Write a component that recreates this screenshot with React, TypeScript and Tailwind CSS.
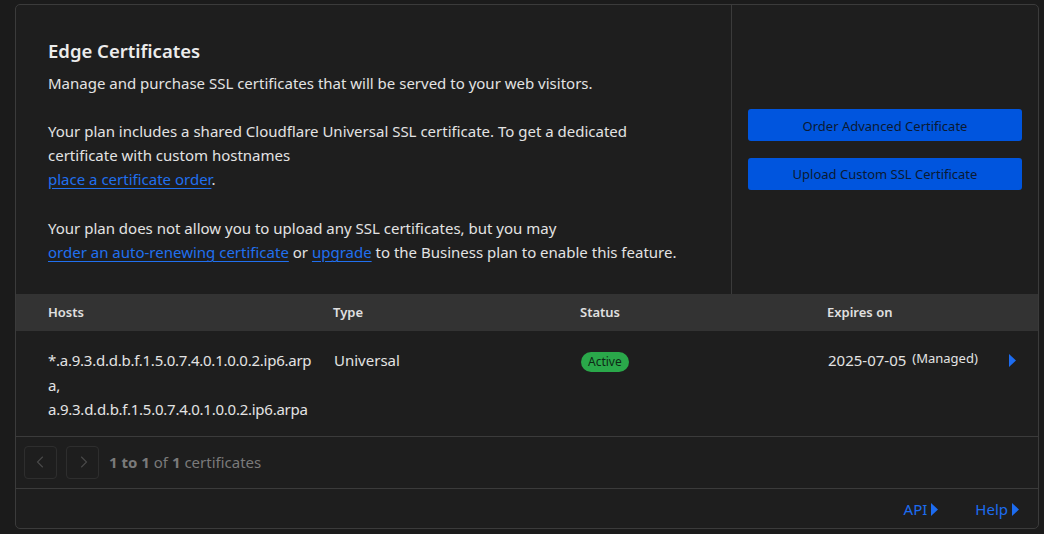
import React from 'react';

const font = { fontFamily: '"Noto Sans", "Open Sans", sans-serif' };

function Caret({ className = '' }: { className?: string }) {
    return (
        <svg viewBox="0 0 7 13" className={`w-[7px] h-[13px] ${className}`} fill="currentColor">
            <polygon points="0,0 7,6.5 0,13" />
        </svg>
    );
}

function PageButton({ dir }: { dir: 'prev' | 'next' }) {
    return (
        <div className="w-[33px] h-[33px] rounded-[4px] border border-[#2e2e2e] flex items-center justify-center text-[#4a4a4a]">
            <svg viewBox="0 0 16 16" className="w-[14px] h-[14px]" fill="none" stroke="currentColor" strokeWidth="1.3">
                {dir === 'prev' ? <polyline points="10,2 4,8 10,14" /> : <polyline points="6,2 12,8 6,14" />}
            </svg>
        </div>
    );
}

export default function App() {
    const link = 'text-[#2170ef] underline underline-offset-[3px] decoration-1';

    return (
        <div className="w-[1044px] h-[534px] bg-[#1b1b1b] pt-[4px] pl-[15px]" style={font}>
            <div className="w-[1024px] h-[525px] rounded-[5px] border border-[#3b3b3b] bg-[#1e1e1e] flex flex-col overflow-hidden">
                {/* Top section */}
                <div className="flex h-[289px]">
                    <div className="w-[715px] pl-[32px] pt-[32px] text-[15px] leading-[24px] text-[#e3e3e3]">
                        <h2 className="text-[18.5px] leading-[28px] font-semibold mb-[6px] text-[#ececec]">Edge Certificates</h2>
                        <p className="mb-[24px]">Manage and purchase SSL certificates that will be served to your web visitors.</p>
                        <p className="mb-[25px]">
                            Your plan includes a shared Cloudflare Universal SSL certificate. To get a dedicated
                            <br />
                            certificate with custom hostnames
                            <br />
                            <span className={link}>place a certificate order</span>.
                        </p>
                        <p>
                            Your plan does not allow you to upload any SSL certificates, but you may
                            <br />
                            <span className={link}>order an auto-renewing certificate</span> or{' '}
                            <span className={link}>upgrade</span> to the Business plan to enable this feature.
                        </p>
                    </div>
                    <div className="flex-1 border-l border-[#3b3b3b] px-[16px] flex flex-col justify-center gap-[17px]">
                        <button className="h-[32px] w-full rounded-[3px] bg-[#0055de] text-[#0b1a33] text-[13px] pt-[3px]">
                            Order Advanced Certificate
                        </button>
                        <button className="h-[32px] w-full rounded-[3px] bg-[#0055de] text-[#0b1a33] text-[13px] pt-[2px]">
                            Upload Custom SSL Certificate
                        </button>
                    </div>
                </div>

                {/* Table header */}
                <div className="grid grid-cols-[317px_247px_247px_1fr] h-[37px] items-center bg-[#333333] text-[13px] font-semibold text-[#e0e0e0] pt-[1px]">
                    <div className="pl-[32px]">Hosts</div>
                    <div>Type</div>
                    <div>Status</div>
                    <div>Expires on</div>
                </div>

                {/* Table row */}
                <div className="grid grid-cols-[317px_247px_247px_1fr] pt-[17px] pb-[14px] text-[15px] leading-[24.5px] text-[#e3e3e3] border-b border-[#3b3b3b]">
                    <div className="pl-[32px] whitespace-nowrap tracking-[-0.25px]">
                        *.a.9.3.d.d.b.f.1.5.0.7.4.0.1.0.0.2.ip6.arp
                        <br />
                        a,
                        <br />
                        a.9.3.d.d.b.f.1.5.0.7.4.0.1.0.0.2.ip6.arpa
                    </div>
                    <div className="pl-[1px]">Universal</div>
                    <div className="pl-[1px]">
                        <span className="inline-flex items-center h-[20px] px-[7px] rounded-full bg-[#2aa84a] text-[#0e2916] text-[12px] leading-none">
                            Active
                        </span>
                    </div>
                    <div className="flex items-start pl-[1px] pr-[22px]">
                        <span>2025-07-05</span>
                        <span className="ml-[6px] text-[13px] leading-[20px]">(Managed)</span>
                        <Caret className="ml-auto mt-[6px] text-[#1d6cf0]" />
                    </div>
                </div>

                {/* Pagination */}
                <div className="h-[52px] flex items-center pl-[8px] gap-[9px] border-b border-[#3b3b3b]">
                    <PageButton dir="prev" />
                    <PageButton dir="next" />
                    <div className="ml-[1px] pt-[1px] text-[15px] text-[#7a7a7a]">
                        <span className="font-bold">1 to 1</span> of <span className="font-bold">1</span> certificates
                    </div>
                </div>

                {/* Footer */}
                <div className="flex-1 flex items-center justify-end pr-[19px] pt-[2px] gap-[37px] text-[15px] text-[#1d6cf0]">
                    <div className="flex items-center gap-[4px]">
                        API <Caret />
                    </div>
                    <div className="flex items-center gap-[4px]">
                        Help <Caret />
                    </div>
                </div>
            </div>
        </div>
    );
}
